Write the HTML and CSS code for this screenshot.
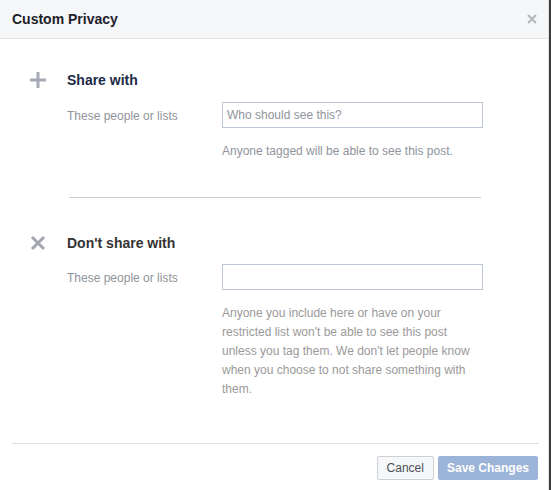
FILE: index.html
```html
<!DOCTYPE html>
<html lang="en">
<head>
    <meta charset="UTF-8">
    <meta name="viewport" content="width=device-width, initial-scale=1.0">
    <title>Custom Privacy</title>
    <link rel="stylesheet" href="styles.css">
</head>
<body>
    <div class="dialog">
        <header class="dialog-head">
            <h1>Custom Privacy</h1>
            <a class="close" href="#" title="Close">
                <svg width="10" height="10" viewBox="0 0 10 10"><path d="M1 1L9 9M9 1L1 9" stroke="#b4b7bc" stroke-width="2"/></svg>
            </a>
        </header>

        <div class="dialog-body">
            <section class="rule">
                <div class="rule-icon">
                    <svg width="16" height="16" viewBox="0 0 16 16"><path d="M8 0V16M0 8H16" stroke="#a5aab5" stroke-width="3"/></svg>
                </div>
                <h2 class="rule-title share">Share with</h2>
                <label class="rule-label" for="share">These people or lists</label>
                <div class="rule-field">
                    <input type="text" id="share" placeholder="Who should see this?">
                    <p class="hint">Anyone tagged will be able to see this post.</p>
                </div>
            </section>

            <hr class="split">

            <section class="rule">
                <div class="rule-icon">
                    <svg width="16" height="16" viewBox="0 0 16 16"><path d="M2 2L14 14M14 2L2 14" stroke="#a2a6ae" stroke-width="3"/></svg>
                </div>
                <h2 class="rule-title">Don't share with</h2>
                <label class="rule-label" for="hide">These people or lists</label>
                <div class="rule-field">
                    <input type="text" id="hide">
                    <p class="hint wide">Anyone you include here or have on your restricted list won't be able to see this post unless you tag them. We don't let people know when you choose to not share something with them.</p>
                </div>
            </section>
        </div>

        <footer class="dialog-foot">
            <button type="button" class="btn">Cancel</button>
            <button type="submit" class="btn primary">Save Changes</button>
        </footer>
    </div>
</body>
</html>
```

FILE: styles.css
```css
body { margin: 0; padding: 0; background: #fff; font-family: "Liberation Sans", Arial, sans-serif; color: #1d2129; }
.dialog { width: 548px; height: 490px; background: #fff; border-right: 1px solid #e2e3e5; box-shadow: 2px 0 0 #3a3a3a; }

.dialog-head { height: 38px; background: #f6f7f9; border-bottom: 1px solid #e5e5e5; display: flex; align-items: center; justify-content: space-between; padding: 0 11px 0 12px; }
.dialog-head h1 { margin: 0; font-size: 14px; font-weight: bold; color: #1d2129; }
.close { display: flex; width: 10px; height: 10px; }

.dialog-body { padding: 31px 0 0 31px; height: 404px; box-sizing: border-box; }
.rule { display: grid; grid-template-columns: 36px 155px 261px; grid-template-rows: 20px auto; row-gap: 12px; }
.rule-icon { display: flex; align-items: center; margin-left: -1px; }
.rule-title { margin: 0; font-size: 14px; line-height: 21px; font-weight: bold; color: #333; grid-column: 2 / 4; }
.rule-title.share { color: #1c2a47; }
.rule-label { grid-column: 2; font-size: 12px; line-height: 28px; color: #90949c; }
.rule-field { grid-column: 3; }
.rule-field input { display: block; width: 100%; height: 26px; box-sizing: border-box; border: 1px solid #bdc7d8; padding: 0 4px; font-family: inherit; font-size: 12px; color: #1d2129; outline: none; }
.rule-field input::placeholder { color: #90949c; }
.hint { margin: 14px 0 0; font-size: 12px; line-height: 19px; color: #90949c; }
.hint.wide { width: 252px; color: #9a9a9a; }

.split { margin: 36px 0 35px 38px; width: 412px; border: 0; border-top: 1px solid #ccc; }
.split + .rule { row-gap: 11px; }

.dialog-foot { margin: 0 9px 0 12px; border-top: 1px solid #dddfe2; padding: 12px 1px 0 0; display: flex; justify-content: flex-end; gap: 4px; }
.btn { height: 24px; padding: 0 9px; border: 1px solid #ced0d4; border-radius: 2px; background: #f6f7f9; color: #4b4f56; font-family: inherit; font-size: 12px; }
.btn.primary { background: #9cb4d8; border-color: #9cb4d8; color: #fff; font-weight: bold; padding: 0 8px; }
```
